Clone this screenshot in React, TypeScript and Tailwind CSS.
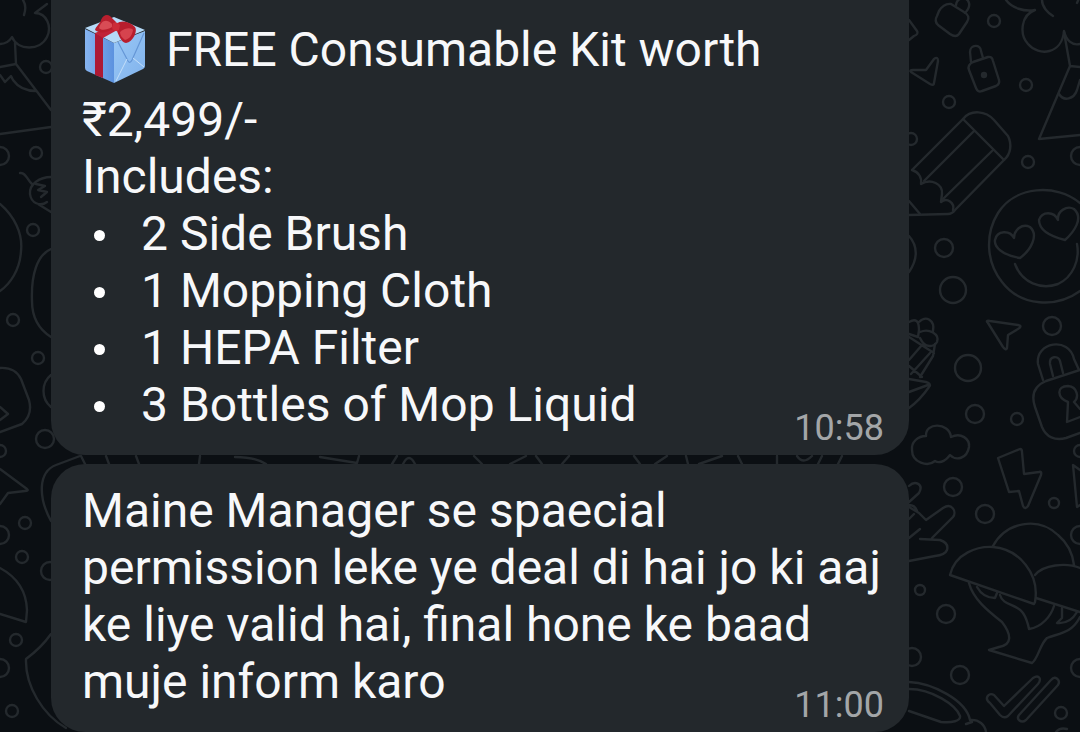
import React from "react";

const items = ["2 Side Brush", "1 Mopping Cloth", "1 HEPA Filter", "3 Bottles of Mop Liquid"];

const dots: [number, number, number][] = [
  [994, 21, 6], [1026, 85, 6], [949, 102, 6], [911, 139, 6], [1028, 162, 6], [1080, 156, 9],
  [944, 248, 9], [953, 290, 13], [1052, 326, 9], [968, 368, 13], [975, 414, 9], [1017, 419, 6],
  [953, 487, 9], [985, 514, 9], [1054, 503, 5], [1080, 535, 9], [920, 590, 5], [946, 614, 9],
  [912, 657, 9], [960, 675, 9], [1080, 668, 9], [1061, 713, 6], [1080, 451, 6],
  [46, 67, 6], [36, 153, 6], [0, 156, 9], [33, 230, 6], [13, 320, 6], [38, 358, 6], [45, 439, 9],
  [0, 451, 6], [25, 523, 6], [0, 535, 9], [22, 557, 6], [50, 571, 9], [16, 640, 6], [0, 668, 9], [12, 711, 6],
];

const doodles: string[] = [
  // tag with ring
  "M939 11 Q944 3 951 4 L964 12 Q971 16 967 22 L959 34 Q956 38 950 34 L938 25 Q934 21 937 16 Z",
  "M956 5 C957 -3 967 -4 969 3 C970 7 967 11 965 13",
  // edge diamond
  "M909 20 L917 31 Q919 34 914 36 L909 40",
  // top right flower
  "M1006 0 C1012 8 1024 12 1035 10 C1021 15 1019 34 1028 44 C1039 57 1062 54 1064 31 C1066 40 1072 46 1080 44",
  "M1042 0 C1042 7 1048 13 1053 16 M1080 -4 L1077 3",
  "M1064 32 L1070 66 L1080 67 M1070 66 L1039 139 L1080 135",
  "M1059 94 C1064 102 1074 99 1077 90 L1080 80",
  // arrowhead
  "M911 72 Q909 70 913 70 L926 70 L934 59 Q938 56 938 61 L934 83 Q934 86 930 84 Z",
  // small lock
  "M973 62 L988 57 Q992 56 993 61 L999 80 Q1000 84 996 86 L982 91 Q978 93 976 88 L969 70 Q967 65 973 62 Z",
  "M971 62 L970 52 C970 44 981 44 981 51 L983 58",
  // pencil
  "M963 119 C971 109 986 111 994 120 L1008 136 C1012 144 1011 154 1004 160 L955 210 Q952 214 948 214 L909 215",
  "M963 119 L912 170 M963 119 L1004 160 M974 131 L924 181 M992 151 L943 199",
  "M912 170 C919 172 922 178 921 184 C931 178 943 184 942 194 L941 202 C947 197 955 203 953 210 M909 201 L920 214",
  // heart-eyed face
  "M1080 203 C1056 183 1015 186 998 213 C985 234 986 262 1002 282 C1021 307 1057 308 1080 291",
  "M1020 258 C1002 255 994 247 995 240 C997 230 1010 230 1014 238 C1014 230 1022 223 1030 227 C1039 235 1031 250 1020 258 Z",
  "M1065 240 C1049 236 1039 229 1039 220 C1042 211 1054 211 1058 220 C1057 211 1067 205 1074 209 C1084 218 1074 232 1065 240 Z",
  "M1015 264 C1022 283 1041 290 1058 284 C1073 277 1080 260 1077 244",
  // edge oval
  "M909 236 C918 246 918 259 909 272",
  // paper plane
  "M988 323 Q985 320 990 321 L1018 325 Q1023 326 1018 329 L1008 335 L1007 348 Q1006 351 1003 347 Z",
  // grapes cone
  "M909 322 Q919 316 919 330 L918 337 L909 334 M919 322 C926 315 935 320 933 331 M920 332 C929 328 940 334 937 342 C934 347 925 349 920 338 M909 337 L934 353 M935 344 L933 356 L920 377 M922 345 L909 360 M930 353 L911 374 M909 366 L922 377",
  "M909 379 L926 382 Q932 384 929 387 Q920 400 909 408 M909 392 L928 385",
  // large padlock
  "M1043 380 L1038 364 C1035 342 1069 336 1074 359 L1079 370",
  "M1053 376 L1050 364 C1049 356 1058 355 1060 361 L1063 373",
  "M1080 370 L1046 381 C1034 386 1031 395 1035 407 L1042 427 C1046 437 1055 441 1066 438 L1080 433",
  "M1080 417 L1067 422 L1068 402 C1057 398 1056 386 1068 386 C1078 387 1079 398 1074 402 L1080 409",
  // cloud
  "M926 436 C925 422 949 422 951 437 C961 432 970 439 969 447 C967 459 956 461 950 455 C944 463 938 463 935 461 C928 467 912 463 912 450 C911 442 918 436 926 436 Z",
  // lightning
  "M998 458 L1020 449 Q1022 449 1022 452 L1024 474 L1039 472 Q1042 471 1041 475 L1028 506 Q1025 510 1023 506 L1019 491 L1009 492 Z",
  "M1080 470 L1073 465 L1077 507 L1080 505",
  // leaf hand
  "M909 486 C915 480 924 484 919 493 L909 502 M909 507 L919 513 L926 520 L943 508 C952 502 957 512 953 517 L932 538 M909 519 L914 514 M909 538 L920 529 M920 539 L940 540 Q949 543 947 550 Q945 555 935 556 L909 561 M909 505 Q915 505 917 511",
  // acorn and mushroom caps
  "M950 575 C955 553 978 546 993 547 C1019 549 1040 574 1035 602 L1034 604 Z",
  "M993 546 C1006 522 1038 516 1058 535 C1070 545 1073 557 1074 565 M1035 575 C1043 565 1066 562 1080 568 M1036 598 L1080 612",
  "M969 583 C973 599 988 611 1002 622 C1012 635 1012 645 999 647 L989 650 L1032 663 C1038 659 1040 644 1047 638 C1060 633 1072 633 1080 617",
  "M977 587 C982 596 989 598 995 598 L997 593 M1000 595 C1003 606 1016 603 1023 613 C1027 619 1028 624 1029 629 C1042 627 1051 616 1054 606 M1062 608 L1062 618 L1057 623 C1067 624 1073 619 1077 612",
  // double tick
  "M990 703 C984 699 988 692 994 695 L1004 706 L1033 678 C1039 674 1042 679 1038 684 L1008 716 Q1004 719 1000 715 Z",
  "M1019 715 L1051 680 C1055 675 1061 680 1058 685 L1026 720 C1021 724 1016 719 1019 715 Z",
  // bottom right dish
  "M909 682 C932 683 966 700 970 720 C979 719 985 725 986 732 M909 689 C932 689 956 705 960 716 C961 721 952 723 941 722 L909 711 M966 724 L972 722 M1056 732 Q1060 727 1067 729",
  // top left flower
  "M23 0 Q27 6 24 15 M47 4 L35 13 C47 13 52 27 47 37 C40 51 18 51 12 37 C9 42 5 44 0 44 M15 43 L16 64 L0 67 M16 64 L51 110 M0 75 L5 82 L11 76 L13 80 C20 90 30 91 36 91 M0 134 L51 127",
  // curled bug
  "M20 173 C26 172 27 180 32 184 M51 177 C40 177 29 184 30 194 C31 203 40 207 47 202 M36 184 L45 186 L38 190 L47 192 L41 197 M38 204 L51 212",
  // left edge curves
  "M0 204 C14 216 23 233 21 251 C20 270 10 284 0 291 M51 249 C37 255 31 275 32 301 C32 318 40 330 51 337 M51 375 C41 383 41 399 51 407",
  "M0 368 Q15 367 21 379 L29 400 Q33 415 22 424 L0 432 M0 407 L8 414 L0 420",
  "M0 469 L27 489 Q29 491 25 491 L8 493 L0 504 M0 568 Q26 582 27 610 L26 622 L0 614",
  "M80 456 L56 465 C38 472 38 497 51 521 M51 634 Q41 648 26 659 C25 686 43 715 66 728",
  // strip between the messages
  "M81 456 L85 464 M106 456 L109 464 M136 456 L139 464 M200 456 L199 464 M235 457 Q255 457 266 464 M320 457 L357 463 L359 456 M392 464 L397 456 M403 464 Q409 452 415 464 M474 456 L482 464 M510 464 L526 456 M536 456 L542 464 M562 464 L569 456 M634 456 L640 464 M655 464 L667 456 M686 456 L688 464 M699 464 L722 456 M738 456 L742 464 M777 456 L777 464 M797 456 Q803 465 812 456 M818 464 L822 456 M838 464 L842 456",
];

function Wallpaper() {
  return (
    <svg
      viewBox="0 0 1080 732"
      preserveAspectRatio="xMidYMid slice"
      className="absolute inset-0 h-full w-full"
      fill="none"
      stroke="#24292d"
      strokeWidth="2.4"
      strokeLinecap="round"
      strokeLinejoin="round"
      aria-hidden="true"
    >
      {dots.map(([x, y, r]) => (
        <circle key={`${x}-${y}`} cx={x} cy={y} r={r} />
      ))}
      <circle cx="984" cy="75" r="2" fill="#24292d" />
      {doodles.map((d) => (
        <path key={d} d={d} />
      ))}
    </svg>
  );
}

function Gift() {
  return (
    <svg viewBox="84 14 62 70" className="ml-0.5 h-[70px] w-[62px] shrink-0" role="img" aria-label="Gift">
      <defs>
        <linearGradient id="giftLeft" x1="0" x2="1">
          <stop offset="0" stopColor="#86b4f0" />
          <stop offset="1" stopColor="#5c92df" />
        </linearGradient>
        <linearGradient id="giftRight" x1="0" x2="1" y2="1">
          <stop offset="0" stopColor="#9ac8f6" />
          <stop offset="1" stopColor="#80b2ec" />
        </linearGradient>
      </defs>
      <path d="M85 29 L114 43 L114 83 L87 71 Q85 70 85 68 Z" fill="url(#giftLeft)" />
      <path d="M114 43 L145 31 L145 66 Q145 68 143 69 L114 83 Z" fill="url(#giftRight)" />
      <path d="M85 28 L114 17 L145 30 L114 43 Z" fill="#b5daf8" />
      <path d="M95 33 L103 37 L103 78 L95 75 Z" fill="#ad1a35" />
      <path d="M95 33 L112 26 L119 29 L103 38 Z" fill="#c02438" />
      <path d="M118 42 L128 61 Q130 64 132 60 L144 33" fill="none" stroke="#6596d6" strokeWidth="1.2" />
      <path d="M116 81 L127 59 M144 67 L133 58" fill="none" stroke="#c4dff9" strokeWidth="1" />
      <path d="M114 28 C108 33 99 34 95 30 C96 26 100 24 101 20 C103 15 107 14 110 16 L116 22 Z" fill="#b81f2e" />
      <path d="M112 27 C107 30 101 31 99 28 C101 21 106 18 112 24 Z" fill="#d84c55" />
      <path d="M116 24 C122 19 130 22 135 27 C138 31 133 42 126 43 C121 42 119 36 117 31 Z" fill="#b81d2d" />
      <path d="M120 32 C126 27 132 28 133 30 C132 36 129 39 125 40 C122 38 120 35 120 32 Z" fill="#d6434e" />
      <path d="M113 23 Q117 21 120 25 L119 30 Q115 33 112 28 Z" fill="#cc2c38" />
    </svg>
  );
}

function Time({ children }: { children: string }) {
  return <time className="float-right mt-8 text-[36px] leading-[40px] text-[#a3a6a8]">{children}</time>;
}

function Bubble({ children }: { children: React.ReactNode }) {
  return <article className="rounded-[34px] bg-[#23282c] pt-[18px] pr-[25px] pb-[7px] pl-[31px]">{children}</article>;
}

export default function App() {
  return (
    <main className="relative flex min-h-screen flex-col overflow-hidden bg-[#0b0f13] font-['Roboto',sans-serif] text-[48px] leading-[57px] text-[#f7f8fa]">
      <Wallpaper />
      <div className="relative -mt-10 flex flex-col gap-[9px] pr-[171px] pl-[51px]">
        <Bubble>
          <p className="flex items-center gap-5 pt-9 pb-[7px]">
            <Gift />
            <span>FREE Consumable Kit worth</span>
          </p>
          <p>₹2,499/-</p>
          <p>Includes:</p>
          <ul>
            {items.map((item, i) => (
              <li key={item} className="flow-root">
                <span className="mr-9 mb-1 ml-3 inline-block size-[11px] rounded-full bg-white align-middle" />
                {item}
                {i === items.length - 1 && <Time>10:58</Time>}
              </li>
            ))}
          </ul>
        </Bubble>
        <Bubble>
          <p className="flow-root">
            Maine Manager se spaecial permission leke ye deal di hai jo ki aaj ke liye valid hai, final hone ke baad
            muje inform karo
            <Time>11:00</Time>
          </p>
        </Bubble>
      </div>
    </main>
  );
}
